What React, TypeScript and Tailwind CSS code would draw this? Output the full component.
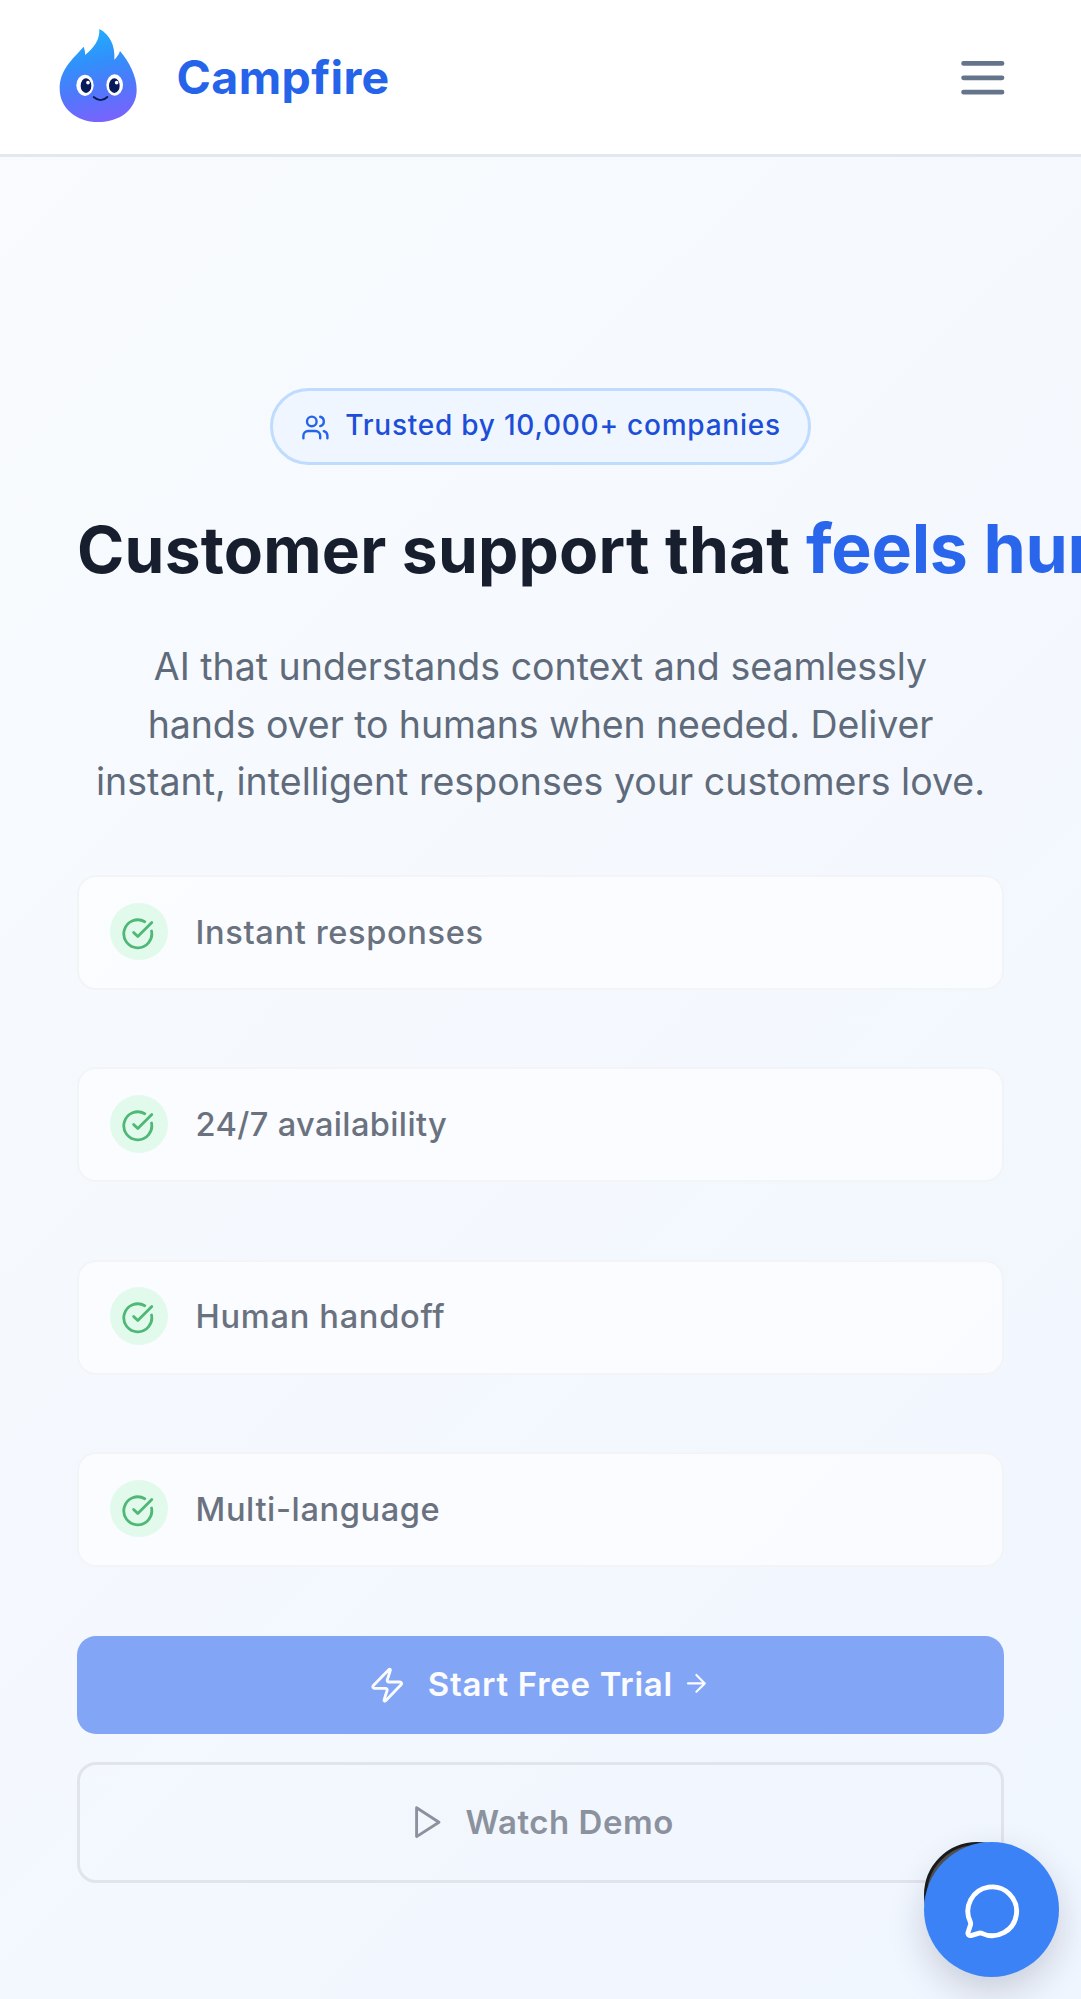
import type { ReactNode } from "react";

function Icon({ className, stroke = 2, children }: { className: string; stroke?: number; children: ReactNode }) {
  return (
    <svg
      className={className}
      viewBox="0 0 24 24"
      fill="none"
      stroke="currentColor"
      strokeWidth={stroke}
      strokeLinecap="round"
      strokeLinejoin="round"
    >
      {children}
    </svg>
  );
}

function Flame() {
  return (
    <svg className="h-[96.67px] w-[80px] shrink-0" viewBox="56 50 240 290">
      <defs>
        <linearGradient id="flame" x1="140" y1="56" x2="200" y2="335" gradientUnits="userSpaceOnUse">
          <stop offset="0" stopColor="#1fb0fd" />
          <stop offset="0.35" stopColor="#3190fb" />
          <stop offset="0.65" stopColor="#4f78fb" />
          <stop offset="1" stopColor="#7a62fd" />
        </linearGradient>
      </defs>
      <path
        d="M180 56C212 73 228 106 225 148C233 140 239 132 242 122C270 155 292 198 292 238C292 298 240 335 177 335C110 335 61 292 61 235C61 180 96 150 133 109C136 118 138 126 137 134C162 114 182 90 180 56Z"
        fill="url(#flame)"
      />
      <ellipse cx="137" cy="225" rx="26" ry="32" fill="#fff" />
      <ellipse cx="226" cy="224" rx="25" ry="32" fill="#fff" />
      <ellipse cx="140" cy="226" rx="16" ry="22" fill="#071a5a" />
      <ellipse cx="225" cy="226" rx="16" ry="22" fill="#071a5a" />
      <circle cx="146" cy="217" r="5.5" fill="#fff" />
      <circle cx="232" cy="217" r="5.5" fill="#fff" />
      <path d="M163 260Q184 279 204 260" fill="none" stroke="#0b1a55" strokeWidth="5.5" strokeLinecap="round" />
    </svg>
  );
}

const features = [
  { label: "Instant responses", tracking: "tracking-[0.62px]" },
  { label: "24/7 availability", tracking: "tracking-[0.36px]" },
  { label: "Human handoff", tracking: "tracking-[0.7px]" },
  { label: "Multi-language", tracking: "tracking-[0.6px]" },
];

export default function App() {
  return (
    <div className="relative h-[1999px] w-full overflow-hidden bg-linear-135 from-[#f9fbfd] to-[#f0f6ff] font-['Inter',sans-serif]">
      <header className="flex h-[157px] items-center justify-between border-b-3 border-[#e2e8f0] bg-white pr-[69px] pl-[58px]">
        <div className="flex items-center">
          <div className="-mt-1">
            <Flame />
          </div>
          <span className="ml-[38.5px] text-[46.5px] leading-[56px] font-bold tracking-[0.38px] text-[#2563eb]">
            Campfire
          </span>
        </div>
        <button className="mt-[2px] text-[#64748b]">
          <Icon className="block size-[57.6px]">
            <path d="M4 6h16M4 12h16M4 18h16" />
          </Icon>
        </button>
      </header>

      <main className="flex flex-col px-[77px] pt-[231px]">
        <div className="flex h-[77px] w-[541px] items-center self-center rounded-full border-3 border-[#bfdbfe] bg-[#eff6ff] pl-[27.5px] text-[#2563eb]">
          <Icon className="mt-0.5 size-[28.8px] shrink-0">
            <path d="M16 21v-2a4 4 0 0 0-4-4H6a4 4 0 0 0-4 4v2" />
            <circle cx="9" cy="7" r="4" />
            <path d="M22 21v-2a4 4 0 0 0-3-3.87M16 3.13a4 4 0 0 1 0 7.75" />
          </Icon>
          <span className="-mt-1 ml-[16px] text-[28px] leading-9 font-medium tracking-[0.76px] whitespace-nowrap text-[#1d4ed8]">
            Trusted by 10,000+ companies
          </span>
        </div>

        <h1 className="mt-[43px] flex h-[80px] items-baseline gap-[16px] leading-[80px] font-bold whitespace-nowrap">
          <span className="text-[64px] tracking-[0.22px] text-[#171e2d]">Customer support that</span>
          <span className="text-[68px] tracking-[-0.3px] text-[#2966ec]">feels human</span>
        </h1>

        <p className="mt-[50px] text-center text-[37.5px] leading-[57.5px] whitespace-nowrap text-[#5f6b7a]">
          <span className="block">AI that understands context and seamlessly</span>
          <span className="block tracking-[-0.08px]">hands over to humans when needed. Deliver</span>
          <span className="block tracking-[0.03px]">instant, intelligent responses your customers love.</span>
        </p>

        <ul className="mt-[64.5px] flex flex-col gap-[77.4px]">
          {features.map((f) => (
            <li
              key={f.label}
              className="flex h-[115px] items-center rounded-[19px] border-2 border-[#f3f4f6] bg-white/55 pl-[31px]"
            >
              <span className="-mt-0.5 grid size-[57.6px] shrink-0 place-items-center rounded-full bg-[#e2faeb] pt-1 pr-0.5 text-[#4fb877]">
                <Icon className="size-[33.6px]">
                  <path d="M21.801 10A10 10 0 1 1 17 3.335" />
                  <path d="m9 11 3 3L22 4" />
                </Icon>
              </span>
              <span className={`-mt-0.5 ml-[28px] text-[32.6px] leading-10 font-medium text-[#6a7280] ${f.tracking}`}>
                {f.label}
              </span>
            </li>
          ))}
        </ul>

        <button className="mt-[68.5px] flex h-[98.5px] items-center justify-center rounded-[19px] bg-[#83a5f5] pr-[2px] text-[#fbfcff]">
          <Icon className="size-[38.4px]" stroke={1.8}>
            <path d="M4 14a1 1 0 0 1-.78-1.63l9.9-10.2a.5.5 0 0 1 .86.46l-1.92 6.02A1 1 0 0 0 13 10h7a1 1 0 0 1 .78 1.63l-9.9 10.2a.5.5 0 0 1-.86-.46l1.92-6.02A1 1 0 0 0 11 14z" />
          </Icon>
          <span className="-mt-[2px] ml-[21px] text-[33px] leading-10 font-semibold tracking-[0.7px]">Start Free Trial</span>
          <Icon className="-mt-1 ml-[9px] size-[28.8px]" stroke={1.8}>
            <path d="M5 12h14M12 5l7 7-7 7" />
          </Icon>
        </button>

        <button className="mt-[27.5px] flex h-[121px] items-center justify-center rounded-[19px] border-3 border-[#e1e4ea] text-[#8c919e]">
          <Icon className="size-[38.4px]" stroke={1.8}>
            <path d="M6 3l14 9-14 9z" />
          </Icon>
          <span className="ml-[20px] text-[33px] leading-10 font-semibold tracking-[0.53px]">Watch Demo</span>
        </button>
      </main>

      <div className="absolute top-[1842px] left-[924px] size-[135px]">
        <div className="absolute top-0 left-0 size-[106px] rounded-full border-3 border-[#1c1c1c] bg-[#525252]" />
        <button className="relative grid size-full place-items-center rounded-full bg-[#3b82f6] pt-1 pl-0.5 text-white shadow-[0_14px_36px_rgba(15,23,42,0.18)]">
          <Icon className="size-[58.5px]">
            <path d="M2.992 16.342a2 2 0 0 1 .094 1.167l-1.065 3.29a1 1 0 0 0 1.236 1.168l3.413-.998a2 2 0 0 1 1.099.092 10 10 0 1 0-4.777-4.719" />
          </Icon>
        </button>
      </div>
    </div>
  );
}
